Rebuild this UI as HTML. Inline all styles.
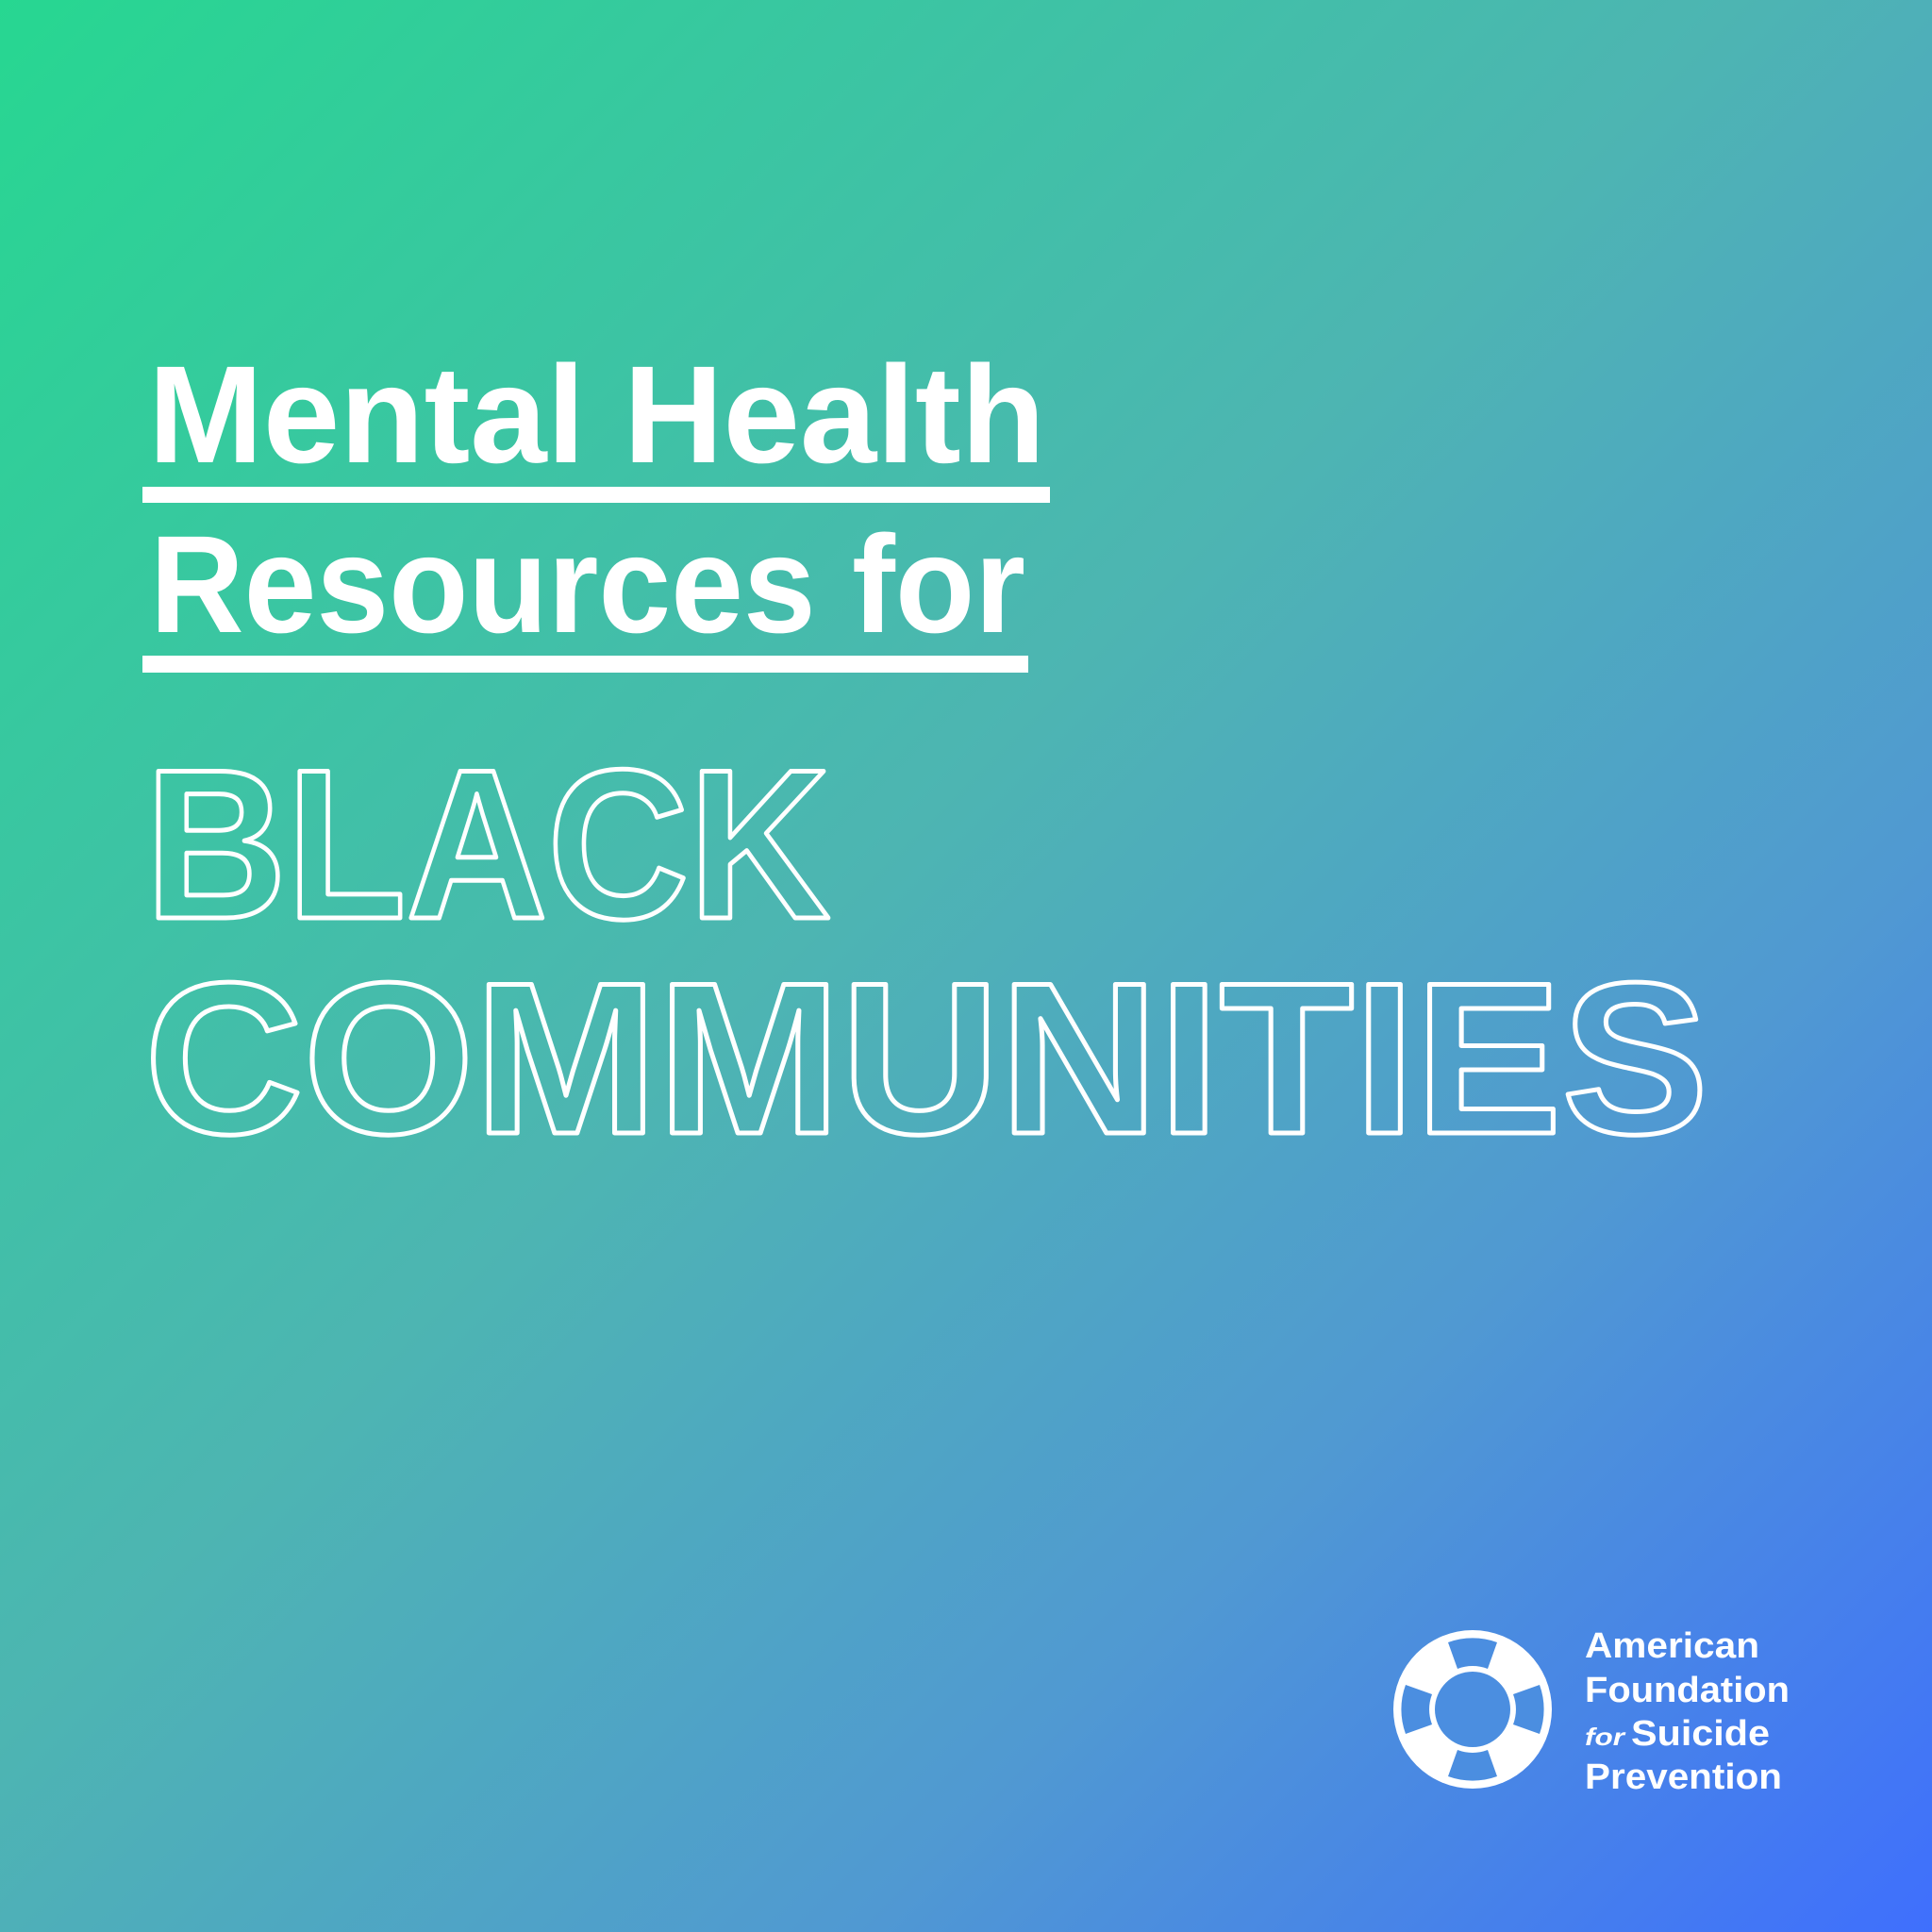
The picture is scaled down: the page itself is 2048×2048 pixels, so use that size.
<!DOCTYPE html>
<html><head><meta charset="utf-8"><style>
html,body{margin:0;padding:0;width:2048px;height:2048px;overflow:hidden}
body{background:linear-gradient(135deg,#27d791 0%,#4db5b2 45%,#5099d2 72%,#3f6ffd 100%)}
svg{position:absolute;left:0;top:0}
</style></head><body>
<svg width="2048" height="2048" viewBox="0 0 2048 2048" xmlns="http://www.w3.org/2000/svg">
<g font-family="Liberation Sans, sans-serif" font-weight="bold" fill="#fff">
<text x="157" y="490" font-size="147" textLength="951" lengthAdjust="spacingAndGlyphs">Mental Health</text>
<rect x="151" y="516" width="962" height="17"/>
<text x="159" y="670" font-size="147" textLength="928" lengthAdjust="spacingAndGlyphs">Resources for</text>
<rect x="151" y="695" width="939" height="18"/>
</g>
<g font-family="Liberation Sans, sans-serif" font-weight="bold" fill="none" stroke="#fff" stroke-width="5" stroke-linejoin="round">
<text x="154" y="973" font-size="226" textLength="726" lengthAdjust="spacingAndGlyphs">BLACK</text>
<text x="153" y="1201" font-size="229" textLength="1658" lengthAdjust="spacingAndGlyphs">COMMUNITIES</text>
</g>
<g transform="translate(1561,1812)">
<circle r="84" fill="#fff"/>
<circle r="40" fill="#4b8ee0"/>
<g fill="#4b8ee0">
<path id="s" d="M-26,-71 A76,76 0 0 1 26,-71 L16,-43 A46,46 0 0 0 -16,-43 Z"/>
<use href="#s" transform="rotate(90)"/>
<use href="#s" transform="rotate(180)"/>
<use href="#s" transform="rotate(270)"/>
</g>
</g>
<g font-family="Liberation Sans, sans-serif" font-weight="bold" fill="#fff" font-size="38">
<text x="1680" y="1757" textLength="185" lengthAdjust="spacingAndGlyphs">American</text>
<text x="1680" y="1804" textLength="217" lengthAdjust="spacingAndGlyphs">Foundation</text>
<text x="1680" y="1850" font-size="26" font-style="italic" textLength="42" lengthAdjust="spacingAndGlyphs">for</text>
<text x="1729" y="1850" textLength="147" lengthAdjust="spacingAndGlyphs">Suicide</text>
<text x="1680" y="1896" textLength="209" lengthAdjust="spacingAndGlyphs">Prevention</text>
</g>
</svg>
</body></html>
